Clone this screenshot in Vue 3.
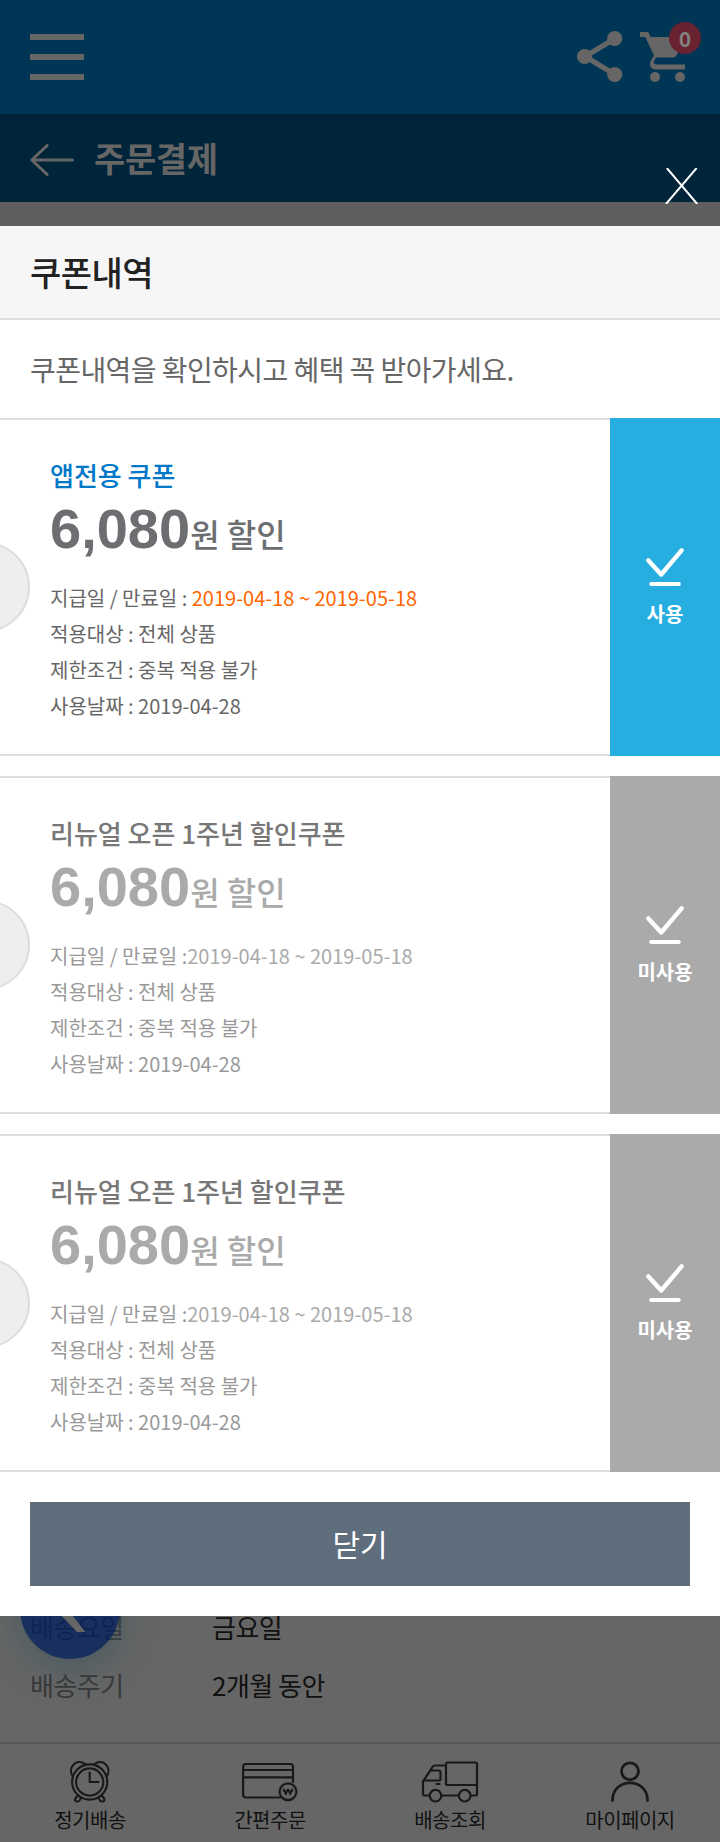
<script setup>
const details = ['적용대상 : 전체 상품', '제한조건 : 중복 적용 불가', '사용날짜 : 2019-04-28']
const period = '2019-04-18 ~ 2019-05-18'
const coupons = [
  { id: 1, name: '앱전용 쿠폰', amount: '6,080', label: '지급일 / 만료일 : ', status: '사용', active: true },
  { id: 2, name: '리뉴얼 오픈 1주년 할인쿠폰', amount: '6,080', label: '지급일 / 만료일 :', status: '미사용', active: false },
  { id: 3, name: '리뉴얼 오픈 1주년 할인쿠폰', amount: '6,080', label: '지급일 / 만료일 :', status: '미사용', active: false },
]
</script>

<template>
  <div class="page">
    <header class="top">
      <div class="menu"><i></i><i></i><i></i></div>
      <div class="tools">
        <svg class="share" width="46" height="52" viewBox="0 0 46 52" fill="#666" stroke="#666">
          <path d="M38 8.500L8 26.500L38 44.500" fill="none" stroke-width="5.200" />
          <g stroke="none">
            <circle cx="37.700" cy="8.500" r="7.600" />
            <circle cx="7.600" cy="26.500" r="7.600" />
            <circle cx="37.700" cy="44.500" r="7.600" />
          </g>
        </svg>
        <div class="cart">
          <svg width="46" height="50" viewBox="0 0 46 50" fill="#666">
            <path d="M0 0H8.200L10.500 5H42.500C44.500 5 45.500 7 44.600 8.700L36.500 23.300C35.700 24.800 34.300 25.600 32.600 25.600H15.900L13.900 29.300C13.400 30.200 13.900 32.400 15.500 32.400H45V37.500H15.500C10.800 37.500 8.700 32.800 10.800 29L14 23.400L5.300 5H0Z" />
            <circle cx="15" cy="45" r="5" />
            <circle cx="40" cy="45" r="5" />
          </svg>
          <span class="count">0</span>
        </div>
      </div>
    </header>
    <div class="sub">
      <svg width="45" height="32" viewBox="0 0 45 32" fill="none" stroke="#666" stroke-width="3" stroke-linecap="round" stroke-linejoin="round">
        <path d="M17.200 1.500L1.800 16L17.200 30.500M1.800 16H42.500" />
      </svg>
      <h1>주문결제</h1>
      <svg class="dismiss" width="34" height="36" viewBox="0 0 34 36" fill="none" stroke="#fff" stroke-width="2">
        <path d="M1.800 0L32.200 36M31.600 0L1 36" />
      </svg>
    </div>

    <main class="modal">
      <h2>쿠폰내역</h2>
      <p class="lead">쿠폰내역을 확인하시고 혜택 꼭 받아가세요.</p>
      <section v-for="c in coupons" :key="c.id" class="coupon" :class="{ active: c.active }">
        <div class="body">
          <h3>{{ c.name }}</h3>
          <div class="amount"><b>{{ c.amount }}</b><span>원 할인</span></div>
          <p>{{ c.label }}<em>{{ period }}</em></p>
          <p v-for="d in details" :key="d">{{ d }}</p>
        </div>
        <div class="state">
          <svg width="38" height="38" viewBox="0 0 38 38" fill="none" stroke="#fff" stroke-width="4.400" stroke-linecap="round" stroke-linejoin="round">
            <path d="M2.400 12.400L15.200 26.500L35.600 2.400" />
            <path d="M5.200 36H32.800" stroke-width="4" />
          </svg>
          <strong>{{ c.status }}</strong>
        </div>
      </section>
      <button type="button">닫기</button>
    </main>

    <div class="under">
      <dl>
        <dt>배송요일</dt><dd>금요일</dd>
        <dt>배송주기</dt><dd>2개월 동안</dd>
      </dl>
      <div class="fab">
        <svg width="100" height="100" viewBox="0 0 100 100" fill="#666"><path d="M56 23H66L44 46L65.500 73H57L33 48Z" /></svg>
      </div>
    </div>

    <nav>
      <div class="item">
        <svg width="42" height="42" viewBox="0 0 42 42" fill="none" stroke="#191919" stroke-width="2.100" stroke-linecap="round">
          <circle cx="20.700" cy="21" r="17.600" /><circle cx="20.700" cy="21" r="13.600" />
          <path d="M20.700 11.500V21H29.500M3.800 15.500C-2 7 7-3.500 16.500 3.300M37.600 15.500C43.500 7 34.400-3.500 25 3.300" />
          <path d="M9.500 34.500C6 36 5 40 7.500 40.500S12 38.500 12 36M32 34.500C35.500 36 36.500 40 34 40.500S29.500 38.500 29.500 36" />
        </svg>
        <span>정기배송</span>
      </div>
      <div class="item">
        <svg width="56" height="42" viewBox="0 0 56 42" fill="none" stroke="#191919" stroke-width="2.200" stroke-linecap="round" stroke-linejoin="round">
          <path d="M38 36.500H4Q1.100 36.500 1.100 33.500V6Q1.100 3 4 3H48Q51 3 51 6V21M1 9H51M1 16.300H51" />
          <circle cx="46" cy="30.700" r="8.400" />
          <path d="M41.700 28L43.800 33.500L46 28L48.200 33.500L50.300 28M41.300 30H50.700" stroke-width="1.600" />
        </svg>
        <span>간편주문</span>
      </div>
      <div class="item">
        <svg width="58" height="42" viewBox="0 0 58 42" fill="none" stroke="#191919" stroke-width="2.200" stroke-linecap="round" stroke-linejoin="round">
          <path d="M8.500 34.500H3Q2 34.500 2 33.500V20.500L11.500 6Q12.500 4.500 14 4.500H25M20.500 34.500H37.500M50 34.500H55Q56 34.500 56 33.500V3Q56 1.500 54.500 1.500H26Q25 1.500 25 3V22.500Q25 24 26.500 24H56" />
          <path d="M2.500 19.500H18Q19.500 19.500 19.500 18V11Q19.500 9.500 18 9.500H9.500M15.500 23H18.500" />
          <circle cx="14.500" cy="34.700" r="5.800" /><circle cx="43.700" cy="34.700" r="5.800" />
        </svg>
        <span>배송조회</span>
      </div>
      <div class="item">
        <svg width="40" height="42" viewBox="0 0 40 42" fill="none" stroke="#191919" stroke-width="2.800" stroke-linecap="round">
          <circle cx="20" cy="10.300" r="8.500" />
          <path d="M2.500 39.500C2.500 16 37.500 16 37.500 39.500" />
        </svg>
        <span>마이페이지</span>
      </div>
    </nav>
  </div>
</template>

<style>
body { margin: 0; background: #666; }
</style>

<style scoped>
.page {
  width: 720px;
  height: 1842px;
  overflow: hidden;
  display: flex;
  flex-direction: column;
  background: #5f5f5f;
  font-family: "Noto Sans CJK KR", "Noto Sans", sans-serif;
}
h1, h2, h3, p, dl, dd { margin: 0; font-weight: 400; }
svg { display: block; flex: none; }
.top {
  height: 114px;
  box-sizing: border-box;
  padding: 31px 30px 0;
  display: flex;
  justify-content: space-between;
  background: #003655;
}
.menu { display: flex; flex-direction: column; gap: 14px; padding-top: 3px; }
.menu i { width: 54px; height: 6px; background: #666; }
.tools { display: flex; padding-right: 5px; margin-right: -1px; gap: 17px; }
.share { margin-top: -1px; }
.cart { position: relative; padding-top: 1px; }
.count {
  position: absolute;
  left: 29px;
  top: -9px;
  width: 32px;
  height: 32px;
  border-radius: 50%;
  background: #692230;
  color: #808080;
  font: bold 21px/32px "Noto Sans CJK KR", sans-serif;
  text-align: center;
}
.sub {
  height: 88px;
  box-sizing: border-box;
  padding: 0 21px 0 30px;
  display: flex;
  align-items: center;
  background: linear-gradient(#002135, #002439 10px);
}
.sub > svg:first-child { margin-top: 4px; }
.sub h1 { margin-left: 19px; font-size: 34px; line-height: 50px; font-weight: 700; letter-spacing: -0.400px; color: #666; }
.dismiss { align-self: flex-end; margin: 0 0 -2px auto; position: relative; }
.modal { margin-top: 24px; height: 1390px; flex: none; background: #fff; }
.modal h2 {
  height: 92px;
  padding-left: 30px;
  border-bottom: 2px solid #ddd;
  background: #f6f6f6;
  color: #222;
  font-size: 34px;
  line-height: 91px;
  font-weight: 500;
  letter-spacing: -0.500px;
}
.lead { height: 98px; padding-left: 30px; font-size: 28px; line-height: 98px; letter-spacing: -0.560px; color: #666; }
.coupon { display: flex; height: 338px; margin-bottom: 20px; color: #999; position: relative; overflow: hidden; }
.coupon::before {
  content: "";
  position: absolute;
  left: -60px;
  top: 124px;
  width: 86px;
  height: 86px;
  border: 2px solid #ddd;
  border-radius: 50%;
  background: #eee;
}
.body { width: 610px; box-sizing: border-box; padding: 36px 0 0 50px; border: solid #ddd; border-width: 2px 0; }
.body h3 { font-size: 26px; line-height: 38px; font-weight: 500; color: #777; }
.amount { display: flex; align-items: baseline; height: 70px; line-height: 70px; margin-bottom: 16px; color: #aaa; }
.amount b { font: bold 56px/70px "Liberation Sans", Arial, sans-serif; }
.amount span { font-size: 32px; font-weight: 500; margin-bottom: 1px; position: relative; top: -1px; }
.body p { font-size: 20px; line-height: 36px; white-space: pre; }
.body em { font-style: normal; color: #aaa; }
.active { color: #666; }
.active h3 { color: #0078c8; }
.active .amount { color: #6d6e71; }
.active em { color: #ff6600; }
.state {
  width: 110px;
  display: flex;
  flex-direction: column;
  align-items: center;
  box-sizing: border-box;
  padding-top: 130px;
  background: #aaa;
  color: #fff;
}
.active .state { background: #26aee0; }
.state strong { margin-top: 13px; font-size: 20px; line-height: 30px; font-weight: 700; }
button {
  display: block;
  width: 660px;
  height: 84px;
  margin: 30px 30px 0;
  padding: 0 0 2px;
  border: 0;
  background: #5f6e7d;
  color: #fff;
  font: 400 30px/82px "Noto Sans CJK KR", sans-serif;
}
.under { position: relative; height: 126px; flex: none; overflow: hidden; background: #666; }
dl { display: grid; grid-template-columns: 182px 1fr; grid-auto-rows: 58px; margin: -18px 0 0 30px; font-size: 26px; line-height: 58px; letter-spacing: -0.500px; }
dt { color: #383838; }
dd { color: #111; }
.fab {
  position: absolute;
  left: 20px;
  top: -57px;
  width: 100px;
  height: 100px;
  border-radius: 50%;
  background: rgba(0, 30, 92, 0.750);
  box-shadow: 0 8px 36px rgba(50, 82, 92, 0.600);
}
nav { display: flex; height: 100px; flex: none; box-sizing: border-box; border-top: 2px solid #595959; background: #666; }
.item { width: 180px; display: flex; flex-direction: column; align-items: center; padding-top: 17px; color: #111; }
.item span { margin-top: 2px; font-size: 20px; line-height: 30px; letter-spacing: -0.500px; }
</style>
